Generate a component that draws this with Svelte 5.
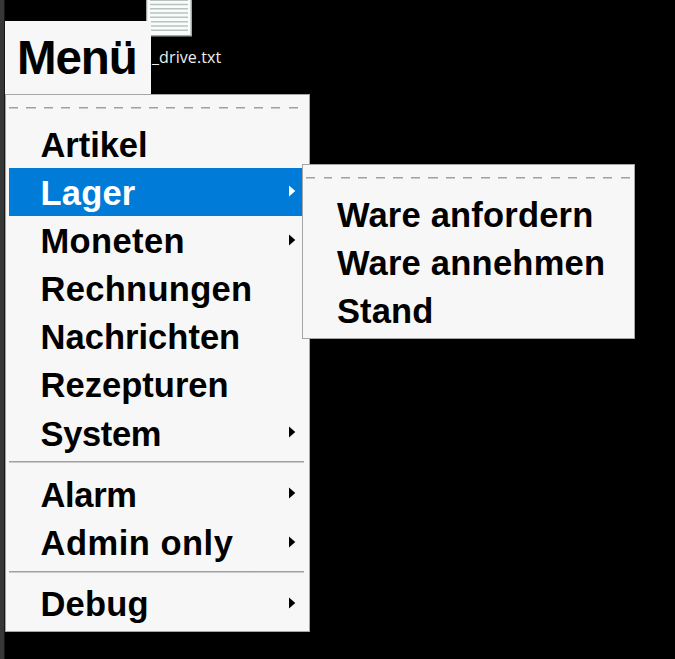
<script>
  const menu = [
    { label: 'Artikel', spacing: -0.05 },
    { label: 'Lager', arrow: true, active: true, spacing: 0.2 },
    { label: 'Moneten', arrow: true, spacing: 0.38 },
    { label: 'Rechnungen', spacing: 0.3 },
    { label: 'Nachrichten', spacing: 0.03 },
    { label: 'Rezepturen', spacing: 0.03 },
    { label: 'System', arrow: true, spacing: -0.35 },
    { separator: true },
    { label: 'Alarm', arrow: true, spacing: -0.35 },
    { label: 'Admin only', arrow: true, spacing: 0.5 },
    { separator: true },
    { label: 'Debug', arrow: true, spacing: 0.2 }
  ];
  const submenu = [
    { label: 'Ware anfordern', spacing: 0.2 },
    { label: 'Ware annehmen', spacing: 0.24 },
    { label: 'Stand', spacing: 0.1 }
  ];
</script>

{#snippet entries(items)}
  <div class="tear"></div>
  {#each items as item}
    {#if item.separator}
      <div class="separator"></div>
    {:else}
      <div class="row" class:active={item.active}>
        <span style="letter-spacing: {item.spacing}px">{item.label}</span>
        {#if item.arrow}
          <svg class="arrow" width="7" height="12" viewBox="0 0 7 12"><path d="M0 .5 6.3 6 0 11.5Z" /></svg>
        {/if}
      </div>
    {/if}
  {/each}
{/snippet}

<main>
  <div class="file">
    <svg width="48" height="38" viewBox="0 0 48 38">
      <path d="M0 0H46V36.5H0Z" fill="#a5a8a3" />
      <path d="M1.3 0H44.5V35H1.3Z" fill="#f8fdfc" />
      {#each [0, 4.3, 8.5, 12.8, 17, 21.5, 25.7, 30] as y}
        <path d="M4 {y + 0.3}H42" stroke="#b9c2be" stroke-width="1.5" />
      {/each}
    </svg>
    <span>_drive.txt</span>
  </div>
  <div class="edge"></div>
  <div class="content">
    <div class="title">Menü</div>
    <nav class="menu">{@render entries(menu)}</nav>
  </div>
  <nav class="menu sub">{@render entries(submenu)}</nav>
</main>

<style>
  :global(body) { margin: 0; background: #000; }
  main {
    position: relative;
    display: flex;
    width: 675px;
    height: 659px;
    overflow: hidden;
    background: #000;
    font-family: 'Liberation Sans', Arial, sans-serif;
    font-weight: bold;
    color: #000;
  }
  .edge { width: 4px; flex: none; background: #373737; border-right: 1px solid #161616; }
  .content { position: relative; padding-top: 20.5px; }
  .title {
    box-sizing: border-box;
    width: 146px;
    height: 73.5px;
    padding-left: 12px;
    background: #f7f7f7;
    font-size: 47.5px;
    line-height: 74px;
    letter-spacing: -1.1px;
  }
  .menu {
    box-sizing: border-box;
    width: 305px;
    padding: 3px 4px 3px 3px;
    border: 1px solid #a5a5a5;
    background: #f7f7f7;
  }
  .sub { position: absolute; left: 301.5px; top: 164px; width: 333.5px; height: 174.5px; }
  .tear {
    height: 22px;
    background: repeating-linear-gradient(90deg, #a0a0a0 0 9px, transparent 9px 17.5px) 0 9px / 100% 1.5px no-repeat;
  }
  .menu:not(.sub) .tear { margin-right: 6px; }
  .row {
    box-sizing: border-box;
    display: flex;
    align-items: center;
    justify-content: space-between;
    height: 48.17px;
    padding: 1.2px 9px 0 31.5px;
    font-size: 34.5px;
    line-height: 50px;
    white-space: nowrap;
  }
  .active { background: #007bd7; color: #fff; }
  .arrow { fill: currentColor; margin-top: -2.8px; }
  .separator {
    height: 13.1px;
    margin-right: 1px;
    background: linear-gradient(#a0a0a0, #a0a0a0) 0 4px / 100% 1.5px no-repeat;
  }
  .file { position: absolute; left: 146px; top: 0; }
  .file svg { display: block; }
  .file span {
    display: block;
    margin: 9px 0 0 6px;
    font: 16px/20px 'Open Sans', 'Noto Sans', sans-serif;
    letter-spacing: 0.1px;
    color: #eee;
  }
</style>
